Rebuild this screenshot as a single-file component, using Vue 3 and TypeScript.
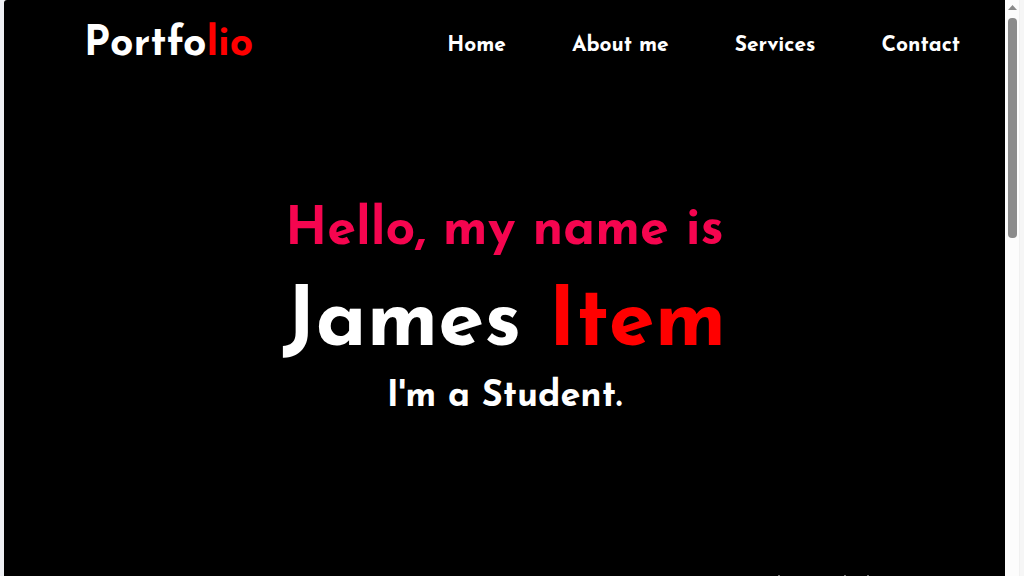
<script setup lang="ts">
interface NavLink {
  label: string
  href: string
}

const links: NavLink[] = [
  { label: 'Home', href: '#home' },
  { label: 'About me', href: '#about' },
  { label: 'Services', href: '#services' },
  { label: 'Contact', href: '#contact' },
]
</script>

<template>
  <div class="window">
    <div class="page">
      <header class="header">
        <a class="logo" href="#home">Portfo<span class="red">lio</span></a>
        <nav class="nav" aria-label="Main">
          <a v-for="link in links" :key="link.href" class="link" :href="link.href">{{ link.label }}</a>
        </nav>
      </header>
      <main id="home" class="hero">
        <p class="greeting">Hello, my name is</p>
        <h1 class="name">James <span class="red">Item</span></h1>
        <p class="role">I'm a Student.</p>
      </main>
      <svg class="specks" width="96" height="1" viewBox="0 0 96 1" aria-hidden="true">
        <path d="M5 0h2v1h-2zM71 0h2v1h-2zM94 0h2v1h-2z" fill="#777" />
      </svg>
    </div>
    <div class="scrollbar" aria-hidden="true">
      <svg class="arrow" width="9" height="5" viewBox="0 0 9 5">
        <path d="M4.5 0 9 5H0z" fill="#8a8a8a" />
      </svg>
      <div class="thumb"></div>
    </div>
  </div>
</template>

<style>
body {
  margin: 0;
  background: #f8f9fa;
}
</style>

<style scoped>
.window {
  display: flex;
  height: 100vh;
  box-sizing: border-box;
  border-left: 4px solid #eef0f4;
  border-right: 4px solid #f6f6f6;
  overflow: hidden;
  font-family: "Josefin Sans", Lato, sans-serif;
  font-weight: 700;
  color: #fff;
}

.page {
  position: relative;
  flex: 1;
  display: flex;
  flex-direction: column;
  background: #000;
  border-top-left-radius: 3px;
}

.header {
  display: flex;
  align-items: center;
  justify-content: space-between;
  padding: 21px 45px 9px 80px;
}

.logo {
  font-size: 41px;
  line-height: 48px;
  color: #fff;
  text-decoration: none;
}

.red {
  color: #f00;
}

.nav {
  display: flex;
  gap: 66px;
  padding-top: 2px;
}

.link {
  font-size: 21px;
  line-height: 28px;
  color: #fff;
  text-decoration: none;
}

.hero {
  flex: 1;
  display: flex;
  flex-direction: column;
  align-items: center;
  justify-content: center;
  padding-bottom: 35px;
}

.greeting,
.name,
.role {
  margin: 0;
  white-space: nowrap;
}

.greeting {
  margin-bottom: 14px;
  font-size: 52px;
  line-height: 60px;
  color: #f5054f;
}

.name {
  font-size: 83px;
  line-height: 100px;
}

.role {
  font-size: 36px;
  line-height: 44px;
}

.specks {
  position: absolute;
  right: 136px;
  bottom: 0;
}

.scrollbar {
  width: 15px;
  display: flex;
  flex-direction: column;
  align-items: center;
  gap: 8px;
  padding-top: 5px;
  background: #fcfcfc;
  box-sizing: border-box;
  border-right: 1px solid #f0f0f0;
}

.arrow {
  display: block;
}

.thumb {
  width: 9px;
  height: 220px;
  border-radius: 4px;
  background: #8b8b8b;
}
</style>
